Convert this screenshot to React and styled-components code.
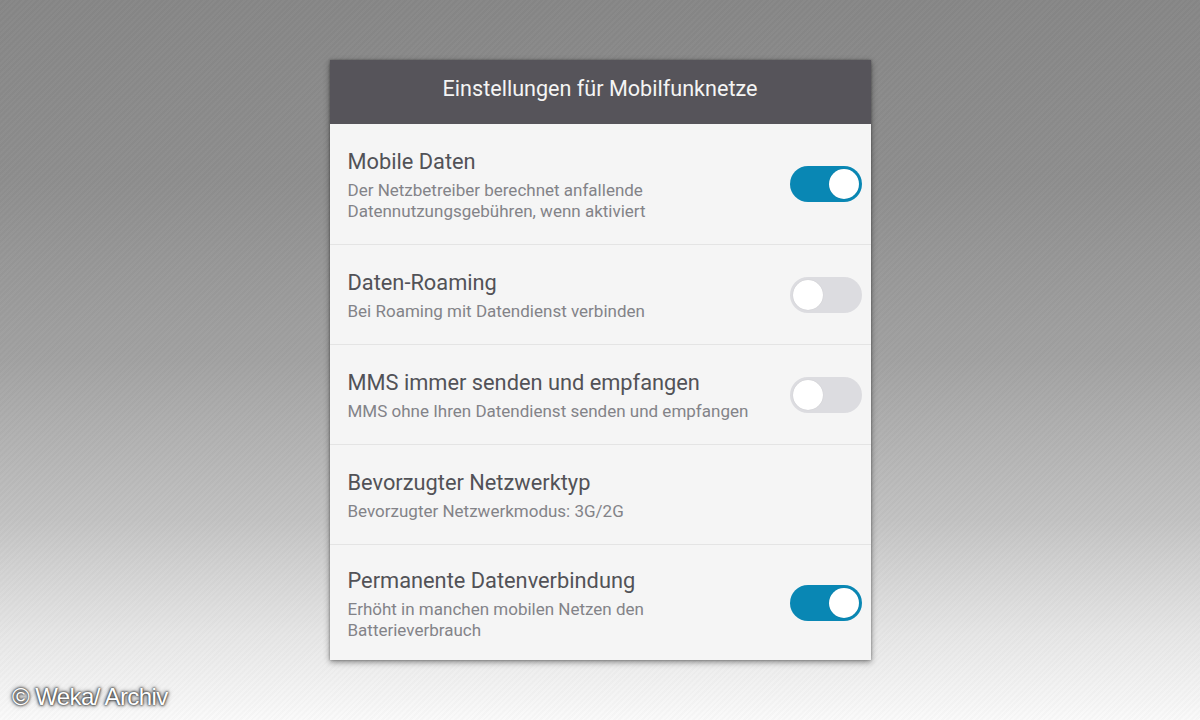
import React from "react";
import styled, { createGlobalStyle } from "styled-components";

const GlobalStyle = createGlobalStyle`
  html, body {
    margin: 0;
    padding: 0;
  }
  body {
    font-family: Roboto, "Noto Sans", sans-serif;
  }
`;

const Stage = styled.div`
  position: relative;
  width: 1200px;
  height: 720px;
  overflow: hidden;
  background:
    repeating-linear-gradient(
      135deg,
      rgba(255, 255, 255, 0.015) 0px,
      rgba(255, 255, 255, 0.015) 2px,
      rgba(0, 0, 0, 0.015) 2px,
      rgba(0, 0, 0, 0.015) 4px
    ),
    linear-gradient(
      180deg,
      #878787 0%,
      #8e8e8e 25%,
      #a2a2a2 50%,
      #c2c2c2 72%,
      #e6e6e6 88%,
      #fafafa 100%
    );
  display: flex;
  justify-content: center;
  padding-top: 60px;
  box-sizing: border-box;
`;

const Panel = styled.div`
  width: 541px;
  height: 600px;
  background: #f5f5f5;
  box-shadow: 0 2px 6px rgba(0, 0, 0, 0.45), 0 0 2px rgba(0, 0, 0, 0.3);
  display: flex;
  flex-direction: column;
`;

const Header = styled.div`
  height: 64px;
  background: #56545a;
  color: #f4f4f4;
  font-size: 21.6px;
  display: flex;
  align-items: center;
  justify-content: center;
  padding-bottom: 7px;
  box-sizing: border-box;
`;

const Row = styled.div`
  height: ${({ h }) => h}px;
  display: flex;
  align-items: center;
  padding: 0 9px 0 18px;
  box-sizing: border-box;
  border-top: ${({ first }) => (first ? "none" : "1px solid #e4e4e4")};
`;

const Texts = styled.div`
  flex: 1;
  display: flex;
  flex-direction: column;
  gap: 5px;
  padding-top: 2px;
`;

const Title = styled.div`
  font-size: 21.8px;
  line-height: 27px;
  color: #525257;
`;

const Sub = styled.div`
  font-size: 17px;
  line-height: 21px;
  color: #838388;
  max-width: ${({ wrap }) => (wrap ? "330px" : "none")};
`;

const Track = styled.div`
  position: relative;
  width: 72px;
  height: 36px;
  border-radius: 18px;
  background: ${({ on }) => (on ? "#0987b4" : "#dcdce0")};
  flex-shrink: 0;
`;

const Knob = styled.div`
  position: absolute;
  top: 3px;
  left: ${({ on }) => (on ? "39px" : "3px")};
  width: 30px;
  height: 30px;
  border-radius: 50%;
  background: #ffffff;
  box-shadow: 0 0 1px rgba(0, 0, 0, 0.15);
`;

const Watermark = styled.div`
  position: absolute;
  left: 12px;
  bottom: 9px;
  font-family: "Liberation Sans", Arial, sans-serif;
  font-size: 24px;
  color: #ffffff;
  letter-spacing: -0.6px;
  text-shadow: 0 0 3px #333, 0 0 5px #555, 0 0 2px #222;
`;

const Toggle = ({ on }) => (
  <Track on={on}>
    <Knob on={on} />
  </Track>
);

const rows = [
  {
    h: 120,
    title: "Mobile Daten",
    sub: "Der Netzbetreiber berechnet anfallende Datennutzungsgebühren, wenn aktiviert",
    wrap: true,
    toggle: true,
  },
  {
    h: 100,
    title: "Daten-Roaming",
    sub: "Bei Roaming mit Datendienst verbinden",
    toggle: false,
  },
  {
    h: 100,
    title: "MMS immer senden und empfangen",
    sub: "MMS ohne Ihren Datendienst senden und empfangen",
    toggle: false,
  },
  {
    h: 100,
    title: "Bevorzugter Netzwerktyp",
    sub: "Bevorzugter Netzwerkmodus: 3G/2G",
  },
  {
    h: 116,
    title: "Permanente Datenverbindung",
    sub: "Erhöht in manchen mobilen Netzen den Batterieverbrauch",
    wrap: true,
    toggle: true,
  },
];

export default function App() {
  return (
    <>
      <GlobalStyle />
      <Stage>
        <Panel>
          <Header>Einstellungen für Mobilfunknetze</Header>
          {rows.map((r, i) => (
            <Row key={r.title} h={r.h} first={i === 0}>
              <Texts>
                <Title>{r.title}</Title>
                <Sub wrap={r.wrap}>{r.sub}</Sub>
              </Texts>
              {r.toggle !== undefined && <Toggle on={r.toggle} />}
            </Row>
          ))}
        </Panel>
        <Watermark>© Weka/ Archiv</Watermark>
      </Stage>
    </>
  );
}
